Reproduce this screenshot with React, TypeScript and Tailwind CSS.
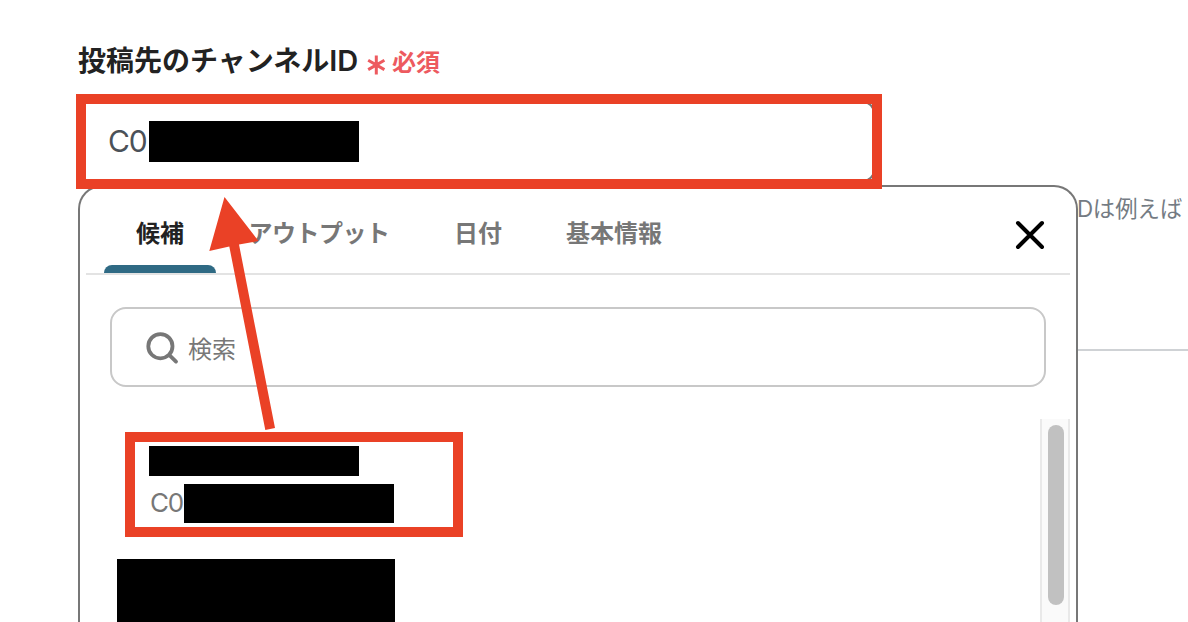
import React from "react";

const tabs = [
  { label: "候補", width: "w-[112px]", active: true },
  { label: "アウトプット", width: "w-[206px]", active: false },
  { label: "日付", width: "w-[112px]", active: false },
  { label: "基本情報", width: "w-[160px]", active: false },
];

function TabBar() {
  return (
    <div className="mx-1.5 flex h-[88px] items-stretch border-b-2 border-[#e3e3e3] pl-[18px] pr-6">
      {tabs.map((tab) => (
        <button
          key={tab.label}
          className={`flex shrink-0 flex-col items-center justify-end text-2xl leading-9 font-bold whitespace-nowrap ${tab.width} ${
            tab.active ? "text-[#222]" : "text-[#777]"
          }`}
        >
          <span className={tab.label === "アウトプット" ? "mb-[13px] tracking-[-0.5px]" : "mb-[13px]"}>{tab.label}</span>
          <span className={`h-2 w-full rounded-t-lg ${tab.active ? "bg-[#2f6a84]" : ""}`} />
        </button>
      ))}
      <button className="mt-8 ml-auto h-8 w-8" aria-label="閉じる">
        <svg viewBox="0 0 32 32" className="h-8 w-8" fill="none" stroke="#000" strokeWidth="4" strokeLinecap="round">
          <path d="M4 4l24 24M28 4L4 28" />
        </svg>
      </button>
    </div>
  );
}

function SearchBox() {
  return (
    <div className="mx-[30px] mt-8 flex h-20 items-center rounded-2xl border-2 border-[#c8c8c8] pl-[34px]">
      <svg viewBox="0 0 34 34" className="mt-0.5 h-[34px] w-[34px]" fill="none" stroke="#777" strokeWidth="3.8" strokeLinecap="round">
        <circle cx="14.4" cy="15.2" r="12.1" />
        <path d="M23.4 24.2l6.6 6.4" />
      </svg>
      <span className="mt-[5px] ml-2 text-2xl leading-9 text-[#777]">検索</span>
    </div>
  );
}

function CandidateList() {
  return (
    <div className="mt-8 flex min-h-0 flex-1 justify-between">
      <div className="flex flex-col pl-[37px]">
        <div className="ml-8 mt-[27px] h-[30px] w-[210px] bg-black" />
        <div className="ml-[33px] mt-2 flex h-[39px] items-center">
          <span className="mb-0.5 w-[34px] font-[Inter] text-[26px] leading-[37px] tracking-[-1.2px] text-[#777]">C0</span>
          <span className="h-[39px] w-[210px] bg-black" />
        </div>
        <div className="mt-9 h-[63px] w-[278px] bg-black" />
      </div>
      <div className="mr-1.5 w-[30px] border-x-2 border-[#e9e9e9] bg-[#fafafa] px-1.5 pt-1.5">
        <div className="h-[180px] w-4 rounded-full bg-[#c1c1c1]" />
      </div>
    </div>
  );
}

export default function App() {
  return (
    <div className="relative h-[622px] w-[1188px] overflow-hidden bg-white font-['Liberation_Sans','Noto_Sans_CJK_JP',sans-serif]">
      <div className="flex h-full flex-col pl-[78px]">
        <div className="mt-[41px] flex h-10 shrink-0 items-center">
          <h1 className="w-[282px] text-[28px] leading-10 font-bold whitespace-nowrap text-[#222]">
            投稿先のチャンネル<span className="font-[Inter] text-[29px] font-semibold">ID</span>
          </h1>
          <svg viewBox="0 0 20 20" className="mt-[7px] ml-[7px] h-5 w-5" fill="none" stroke="#ed5a5f" strokeWidth="3">
            <path d="M9.3 .4v19M1.2 5.2l16.2 9.4M17.4 5.2l-16.2 9.4" />
          </svg>
          <span className="mt-[3px] ml-[5px] text-2xl font-bold text-[#ed5a5f]">必須</span>
        </div>
        <div className="mt-5 flex h-[81px] w-[797px] shrink-0 items-center rounded-xl border-2 border-[#777] pl-7">
          <span className="mb-0.5 w-[41px] font-[Inter] text-[30px] leading-10 tracking-[-1.2px] text-[#4b5158]">C0</span>
          <span className="h-[41px] w-[210px] bg-black" />
        </div>
        <div className="mt-[3px] flex min-h-0 flex-1">
          <section className="flex w-[1000px] shrink-0 flex-col rounded-t-3xl border-2 border-b-0 border-[#777] bg-white">
            <TabBar />
            <SearchBox />
            <CandidateList />
          </section>
          <aside className="h-[166px] flex-1 border-b-2 border-[#cfd2d5] pt-2">
            <p className="-ml-px text-[22.4px] leading-8 whitespace-nowrap text-[#747b83]">
              <span className="font-[Inter] tracking-[-0.4px]">D</span>は例えば
            </p>
          </aside>
        </div>
      </div>

      <div className="pointer-events-none absolute top-[94px] left-[76px] h-[95px] w-[806px] border-10 border-[#ea4126]" />
      <div className="pointer-events-none absolute top-[432px] left-[125px] h-[105px] w-[338px] border-10 border-[#ea4126]" />
      <svg viewBox="0 0 60 240" className="pointer-events-none absolute top-[195px] left-[205px] h-[240px] w-[60px] overflow-visible" fill="#ea4126">
        <path d="M19.5 2L53.5 46L34 49.5L70 233L60.3 235L24.3 51.5L4.3 56Z" />
      </svg>
    </div>
  );
}
